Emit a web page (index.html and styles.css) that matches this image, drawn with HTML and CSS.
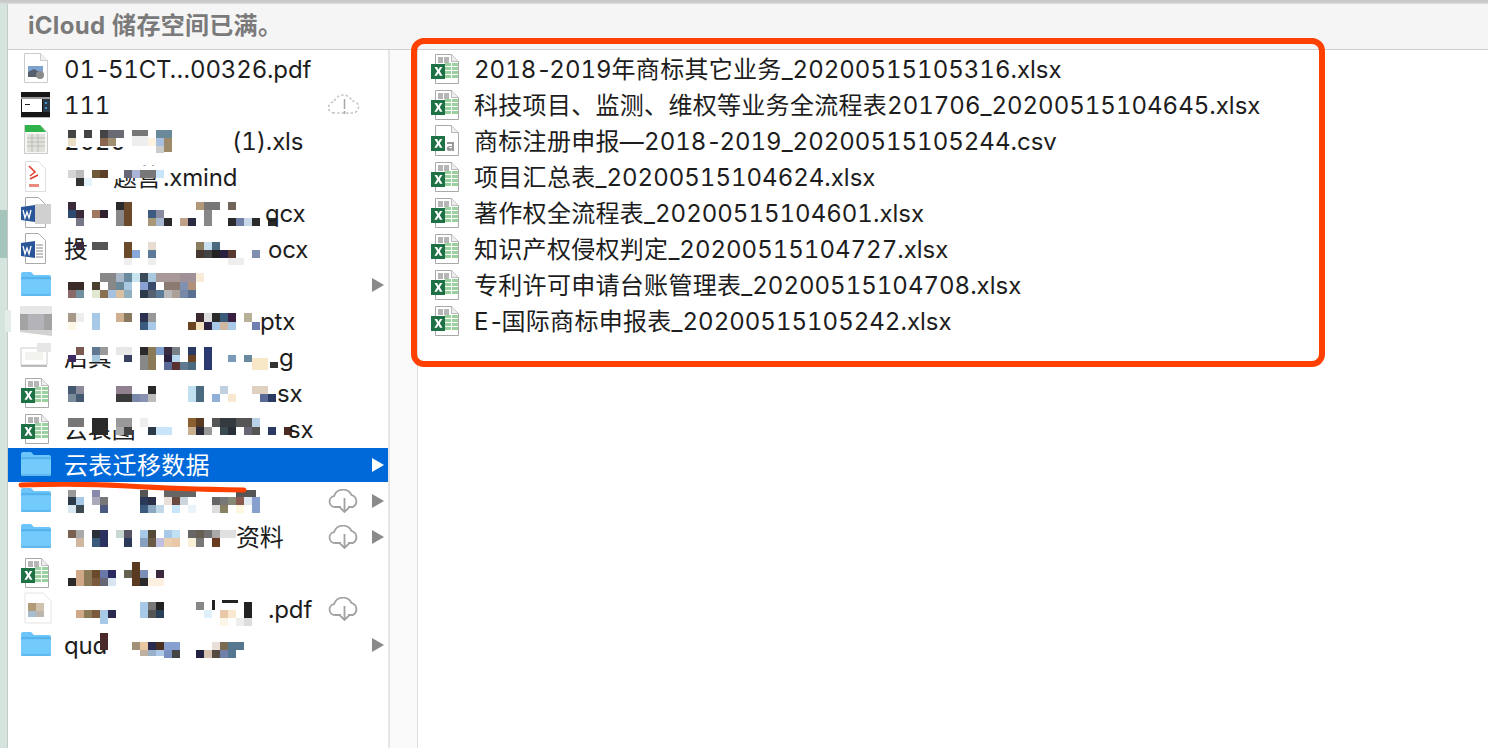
FILE: index.html
```html
<!DOCTYPE html>
<html lang="zh-CN">
<head>
  <meta charset="UTF-8">
  <title>云表迁移数据</title>
  <link rel="stylesheet" href="styles.css">
</head>
<body>
  <svg class="defs" width="0" height="0">
    <symbol id="excel" viewBox="0 0 32 34">
      <path d="M6.500 2.500h16l7 7v22h-23z" fill="#fff" stroke="#a9a9a9"/>
      <path d="M22.500 2.500v7h7" fill="#eee" stroke="#bbb"/>
      <path d="M9 5h5v6H9zM15 5h5v6h-5z" fill="#b5b5b5"/>
      <path d="M16 11h6v3h-6zM23 11h6v3h-6zM16 15h6v3h-6zM23 15h6v3h-6zM16 19h6v3h-6zM23 19h6v3h-6zM16 23h6v3h-6zM23 23h6v3h-6z" fill="#9bd09e"/>
      <path d="M2 12h14v15H2z" fill="#1e7145"/>
      <path d="M5.500 15h2.600l1.400 2.700 1.400-2.700h2.500l-2.600 4.300 2.700 4.500h-2.600l-1.500-2.900-1.500 2.900H5.400l2.700-4.500z" fill="#fff"/>
    </symbol>
    <symbol id="folder" viewBox="0 0 32 34">
      <path d="M2 6q0-2 2-2h8l3 3h15q2 0 2 2v17q0 2-2 2H4q-2 0-2-2z" fill="#6cc5fa"/>
      <path d="M2 10q0-1 1-1h27q2 0 2 1v1H2z" fill="#55b2ea"/>
      <path d="M2 12h30v14q0 2-2 2H4q-2 0-2-2z" fill="#73cbfc"/>
      <path d="M2 27h30" stroke="#4ea6dc"/>
    </symbol>
    <symbol id="cloud" viewBox="0 0 32 24">
      <path d="M13 18H7a5.500 5.500 0 0 1-1-10.900A9.500 9.500 0 0 1 23.500 6 6.500 6.500 0 0 1 25 18h-5" fill="none" stroke="#a2a2a2" stroke-width="1.800"/>
      <path d="M16.500 9v14M12 18.500l4.500 4.500 4.500-4.500" fill="none" stroke="#a2a2a2" stroke-width="1.800"/>
    </symbol>
  </svg>

  <div class="top-edge"></div>
  <div class="shell">
    <div class="desk"></div>
    <div class="finder">
      <div class="notice">iCloud 储存空间已满。</div>
      <div class="panes">
        <ul class="column col-left">
          <li class="row">
            <svg class="icon" viewBox="0 0 32 34"><path d="M5.500 1.500h16l7 7v22h-23z" fill="#fff" stroke="#ccc"/><path d="M21.500 1.500v7h7" fill="#f2f2f2" stroke="#ccc"/><path d="M9 14h15v11H9z" fill="#7fa3cf"/><path d="M9 20l6-3 9 5v3H9z" fill="#56606e"/><circle cx="21" cy="23" r="4" fill="#8a8a8a"/></svg>
            <span class="name">01<span class="dash">-</span>51CT…00326.pdf</span>
          </li>
          <li class="row">
            <svg class="icon" viewBox="0 0 32 34"><path d="M2 4h29v25H2z" fill="#161616"/><path d="M2 9h29v2H2z" fill="#9a9a9a"/><path d="M3 11h20v13H3z" fill="#fff"/><path d="M24 11h7v13h-7z" fill="#2b3a44"/><path d="M26 14h2v2h-2zM26 19h2v2h-2z" fill="#3b9ad9"/><path d="M6 16h5v1H6z" fill="#222"/><path d="M2 29h29v1H2z" fill="#bbb"/></svg>
            <span class="name">111</span>
            <svg class="badge" viewBox="0 0 32 24"><path d="M6 20a5.500 5.500 0 0 1 0-11A9.500 9.500 0 0 1 24 8a6 6 0 0 1 1 12z" fill="none" stroke="#c4c4c4" stroke-width="1.500" stroke-dasharray="2.500 2"/><path d="M16.500 6v10M16.500 18v3" stroke="#a6a6a6" stroke-width="1.500"/></svg>
          </li>
          <li class="row">
            <svg class="icon" viewBox="0 0 32 34"><path d="M5.500 1.500h16l7 7v21h-23z" fill="#f6f6f4" stroke="#ccc"/><path d="M6 1h15l6 7H6z" fill="#2fb34a"/><path d="M8 10h18v18H8z" fill="#e2e2dc"/><path d="M8 14h18M8 18h18M8 22h18M13 10v18M19 10v18" stroke="#bcbcb6"/></svg>
            <span class="name"><span class="lead">2020</span><svg class="smudge" width="168" height="34" viewBox="64 124 168 34"><path fill="#fff" d="M64 128h72v19H64z"/><path fill="#444" d="M68 130h8v8h-8zM84 130h8v8h-8zM100 130h8v8h-8z"/><path fill="#6a6a74" d="M108 130h16v8h-16z"/><path fill="#777" d="M132 130h16v6h-16z"/><path fill="#6a8a9a" d="M156 130h16v8h-16z"/><path fill="#eaddc8" d="M68 138h8v8h-8z"/><path fill="#8a6650" d="M100 138h8v8h-8z"/><path fill="#a09070" d="M108 138h8v8h-8z"/><path fill="#eee" d="M132 136h16v10h-16z"/><path fill="#fdf3e0" d="M148 138h8v8h-8z"/><path fill="#a8c0e0" d="M156 138h8v8h-8z"/><path fill="#9c8a68" d="M164 138h8v14h-8z"/><path fill="#ccc" d="M156 146h8v7h-8z"/></svg>(1).xls</span>
          </li>
          <li class="row">
            <svg class="icon" viewBox="0 0 32 34"><path d="M6.500 1.500h13l7 7v23h-20z" fill="#fff" stroke="#ddd"/><path d="M10 6l6 6-5 4M11 19l8-4" fill="none" stroke="#e03a2e" stroke-width="1.500"/><path d="M10 24h10v3H10z" fill="#e88a80"/></svg>
            <span class="name xmind"><span class="lead cjk">题营</span><svg class="smudge" width="49" height="34" viewBox="64 160 49 34"><path fill="#fff" d="M110 166h56v12h-56z"/><path fill="#d5d5d5" d="M68 170h8v8h-8z"/><path fill="#bbb" d="M76 170h8v8h-8z"/><path fill="#6e5a38" d="M92 170h8v8h-8z"/><path fill="#5e3f2a" d="M100 170h8v8h-8z"/><path fill="#667" d="M124 170h8v8h-8z"/><path fill="#aab4d8" d="M132 170h8v8h-8z"/><path fill="#777" d="M140 170h16v8h-16z"/><path fill="#c8e4f8" d="M156 170h8v8h-8z"/><path fill="#333" d="M76 178h8v8h-8z"/><path fill="#e4f4fa" d="M84 178h8v8h-8z"/></svg><span class="tail-xmind">.xmind</span></span>
          </li>
          <li class="row">
            <svg class="icon" viewBox="0 0 32 34"><path d="M6.500 1.500h13l7 7v23h-20z" fill="#fff" stroke="#aaa"/><path d="M16 8h16v20H16z" fill="#d0d0d0"/><path d="M2 11l14-2v17l-14-2z" fill="#2a5699"/><path d="M4 14l2 8 2-6 2 6 2-8" fill="none" stroke="#fff" stroke-width="1.300"/></svg>
            <span class="name"><svg class="smudge" width="201" height="34" viewBox="64 196 201 34"><path fill="#3a2a3a" d="M68 202h8v8h-8zM76 210h8v8h-8z"/><path fill="#2a2a2a" d="M116 202h8v8h-8zM164 218h8v8h-8zM228 218h8v8h-8zM252 218h8v8h-8zM268 218h8v8h-8z"/><path fill="#6a4a2a" d="M124 202h8v24h-8z"/><path fill="#b09878" d="M196 202h8v8h-8z"/><path fill="#777" d="M204 202h16v8h-16z"/><path fill="#888" d="M204 210h8v16h-8zM116 210h8v16h-8z"/><path fill="#6e6458" d="M228 202h8v8h-8z"/><path fill="#2d4a70" d="M68 210h8v8h-8z"/><path fill="#a07860" d="M92 210h8v8h-8z"/><path fill="#302030" d="M100 210h8v8h-8z"/><path fill="#3d5a80" d="M148 210h8v8h-8z"/><path fill="#8a8aa0" d="M156 210h8v8h-8z"/><path fill="#778" d="M76 218h8v8h-8z"/><path fill="#a89878" d="M148 218h8v8h-8z"/><path fill="#a8b8d0" d="M156 218h8v8h-8z"/><path fill="#c0a088" d="M180 218h8v8h-8z"/><path fill="#2a2a40" d="M188 218h8v8h-8z"/><path fill="#7080a8" d="M236 218h8v8h-8z"/><path fill="#c8d8e8" d="M244 218h8v8h-8z"/></svg>qcx</span>
          </li>
          <li class="row">
            <svg class="icon" viewBox="0 0 32 34"><path d="M6.500 1.500h13l7 7v23h-20z" fill="#fff" stroke="#aaa"/><path d="M17 13h7M17 16h7M17 19h7M17 22h7M17 25h7" stroke="#888"/><path d="M2 11l14-2v17l-14-2z" fill="#2a5699"/><path d="M4 14l2 8 2-6 2 6 2-8" fill="none" stroke="#fff" stroke-width="1.300"/></svg>
            <span class="name"><span class="lead cjk">投</span><svg class="smudge" width="204" height="34" viewBox="64 232 204 34"><path fill="#3a2a3a" d="M76 242h8v8h-8z"/><path fill="#555" d="M92 242h16v8H92z"/><path fill="#6a4a2a" d="M124 242h8v16h-8z"/><path fill="#e8dcd0" d="M148 242h8v8h-8z"/><path fill="#8a7e5e" d="M196 242h8v8h-8z"/><path fill="#c8dff0" d="M204 242h8v8h-8z"/><path fill="#4a6a80" d="M212 242h8v8h-8z"/><path fill="#88a8d8" d="M132 250h8v8h-8z"/><path fill="#5a7a98" d="M148 250h8v8h-8z"/><path fill="#443830" d="M196 250h8v8h-8z"/><path fill="#444" d="M204 250h8v8h-8z"/><path fill="#222" d="M212 250h8v8h-8z"/><path fill="#2a2040" d="M220 250h8v8h-8z"/><path fill="#5a3a30" d="M228 250h8v8h-8z"/><path fill="#8090b0" d="M252 250h8v8h-8z"/><path fill="#eee" d="M124 258h8v7h-8zM148 258h8v7h-8zM228 258h16v7h-16z"/></svg>ocx</span>
          </li>
          <li class="row">
            <svg class="icon"><use href="#folder"/></svg>
            <span class="name"><svg class="smudge" width="140" height="34" viewBox="64 268 140 34"><path fill="#888" d="M100 273h16v9h-16zM108 282h8v8h-8z"/><path fill="#a8b8c8" d="M116 273h8v9h-8z"/><path fill="#6a8aa0" d="M124 273h8v9h-8z"/><path fill="#c8e4f0" d="M132 273h8v9h-8z"/><path fill="#3a4a58" d="M140 273h8v9h-8z"/><path fill="#a8c8e0" d="M148 273h8v9h-8zM124 282h8v8h-8z"/><path fill="#a89898" d="M156 273h24v9h-24z"/><path fill="#a09098" d="M180 273h16v9h-16z"/><path fill="#f8ecd8" d="M196 273h8v9h-8z"/><path fill="#3a2a28" d="M68 282h16v8H68z"/><path fill="#4a4030" d="M92 282h8v8h-8z"/><path fill="#6a8a9a" d="M116 282h8v8h-8z"/><path fill="#8aa0d0" d="M140 282h8v8h-8z"/><path fill="#3a4a6a" d="M148 282h8v8h-8z"/><path fill="#8a7a70" d="M164 282h16v8h-16z"/><path fill="#8090b0" d="M180 282h8v8h-8z"/><path fill="#b09078" d="M188 282h8v8h-8z"/><path fill="#8a6a68" d="M68 290h8v8h-8z"/><path fill="#7090a0" d="M76 290h8v8h-8z"/><path fill="#e0e8d0" d="M92 290h8v8h-8z"/><path fill="#887050" d="M100 290h8v8h-8z"/><path fill="#a8c0e0" d="M108 290h8v8h-8z"/><path fill="#d8c0a0" d="M116 290h8v8h-8z"/><path fill="#90b0c0" d="M124 290h8v8h-8z"/><path fill="#2a3a4a" d="M140 290h8v8h-8z"/><path fill="#556070" d="M148 290h8v8h-8z"/><path fill="#5a7a98" d="M156 290h8v8h-8z"/><path fill="#b8b8b8" d="M164 290h8v8h-8z"/><path fill="#aaa098" d="M172 290h8v8h-8z"/><path fill="#7888a8" d="M180 290h8v8h-8z"/><path fill="#5a7090" d="M188 290h8v8h-8z"/></svg></span>
            <span></span>
            <svg class="arrow" viewBox="0 0 12 14"><path d="M0 0l12 7-12 7z"/></svg>
          </li>
          <li class="row">
            <svg class="icon" viewBox="0 0 32 34"><path d="M-14 6h6v22h-6z" fill="#e4ece8"/><path d="M1 2h32v22H1z" fill="#e6e6e6"/><path d="M1 10h32v16H1z" fill="#a3a3a3"/><path d="M9 10h16v16H9z" fill="#b4b4b8"/><path d="M1 26h32v6L1 28z" fill="#d2d2d2"/></svg>
            <span class="name"><svg class="smudge" width="196" height="34" viewBox="64 304 196 34"><path fill="#a89888" d="M68 313h8v9h-8z"/><path fill="#eee" d="M76 313h8v9h-8z"/><path fill="#a8c8e8" d="M92 313h8v17h-8zM148 322h8v8h-8zM212 322h8v8h-8zM228 322h8v8h-8z"/><path fill="#d0b090" d="M116 313h8v9h-8z"/><path fill="#887860" d="M124 313h8v9h-8z"/><path fill="#2a3050" d="M140 313h8v9h-8z"/><path fill="#999" d="M148 313h8v9h-8z"/><path fill="#3a2a30" d="M196 313h8v9h-8z"/><path fill="#ddd" d="M204 313h8v9h-8z"/><path fill="#2a2a2a" d="M212 313h8v9h-8z"/><path fill="#3a5a7a" d="M220 313h8v9h-8z"/><path fill="#3a2040" d="M228 313h8v9h-8z"/><path fill="#b8b098" d="M244 313h8v9h-8z"/><path fill="#fdf5e5" d="M68 322h8v8h-8z"/><path fill="#3a5a80" d="M140 322h8v8h-8z"/><path fill="#6a4420" d="M188 322h8v8h-8z"/><path fill="#f0e0c0" d="M196 322h8v8h-8z"/><path fill="#2a2040" d="M204 322h8v8h-8z"/><path fill="#d0b8a0" d="M220 322h8v8h-8z"/><path fill="#7080b0" d="M252 322h8v8h-8z"/></svg>ptx</span>
          </li>
          <li class="row">
            <svg class="icon" viewBox="0 0 32 34"><path d="M2 8h26v17H2z" fill="#fff" stroke="#ccc"/><path d="M6 12h18v8H6z" fill="#f2f2ee"/><path d="M18 3h14v9H18z" fill="#e6e6e6"/><path d="M2 25h26v2H2z" fill="#bbb"/></svg>
            <span class="name"><span class="lead cjk">后真</span><svg class="smudge" width="215" height="34" viewBox="64 340 215 34"><path fill="#fff" d="M64 344h56v15H64z"/><path fill="#7a5a50" d="M76 347h8v8h-8z"/><path fill="#607890" d="M92 347h8v8h-8z"/><path fill="#999" d="M100 347h8v8h-8z"/><path fill="#e8e8e8" d="M116 347h16v8h-16z"/><path fill="#2a2a2a" d="M140 347h8v8h-8z"/><path fill="#8a7a58" d="M148 347h8v23h-8z"/><path fill="#80a0d0" d="M156 347h8v8h-8z"/><path fill="#3a2a40" d="M164 347h8v8h-8z"/><path fill="#788088" d="M172 347h8v8h-8z"/><path fill="#2a3a60" d="M188 347h8v8h-8z"/><path fill="#2a3a70" d="M204 347h8v23h-8z"/><path fill="#3a2a60" d="M68 355h8v7h-8z"/><path fill="#a8c8e0" d="M92 355h8v7h-8z"/><path fill="#3a4060" d="M124 355h8v7h-8z"/><path fill="#888" d="M140 355h8v15h-8z"/><path fill="#2a2040" d="M164 355h8v7h-8z"/><path fill="#b8d8f0" d="M172 355h8v7h-8z"/><path fill="#6a4424" d="M188 355h8v7h-8z"/><path fill="#7a9ab8" d="M228 355h8v7h-8z"/><path fill="#6a8aa0" d="M244 355h8v7h-8z"/><path fill="#5a6a98" d="M164 362h8v8h-8z"/><path fill="#5a3030" d="M172 362h8v8h-8z"/><path fill="#607890" d="M180 362h8v8h-8z"/><path fill="#4a6a80" d="M188 362h8v8h-8z"/><path fill="#f8e8c8" d="M252 358h16v12h-16z"/><path fill="#333" d="M270 362h8v6h-8z"/></svg>g</span>
          </li>
          <li class="row">
            <svg class="icon"><use href="#excel"/></svg>
            <span class="name"><svg class="smudge" width="213" height="34" viewBox="64 376 213 34"><path fill="#445870" d="M68 386h8v8h-8zM76 394h8v8h-8z"/><path fill="#8a8a9a" d="M76 386h8v8h-8z"/><path fill="#908090" d="M116 386h16v8h-16z"/><path fill="#2a2a2a" d="M148 386h8v8h-8z"/><path fill="#c0e0f0" d="M188 386h8v16h-8z"/><path fill="#4a6a80" d="M196 386h8v16h-8z"/><path fill="#c0d0e0" d="M220 386h8v8h-8z"/><path fill="#e0d0c0" d="M252 386h16v8h-16z"/><path fill="#7a8a98" d="M68 394h8v8h-8z"/><path fill="#3a3a3a" d="M116 394h16v8h-16z"/><path fill="#7888a8" d="M132 394h8v8h-8z"/><path fill="#8a90b0" d="M140 394h8v8h-8z"/><path fill="#bbb" d="M148 394h8v8h-8z"/><path fill="#90b0d8" d="M212 394h8v8h-8z"/><path fill="#f8e8d0" d="M228 394h8v8h-8z"/><path fill="#5a6a98" d="M260 394h8v8h-8z"/><path fill="#2a3a60" d="M268 394h8v8h-8z"/></svg>sx</span>
          </li>
          <li class="row">
            <svg class="icon"><use href="#excel"/></svg>
            <span class="name"><span class="lead cjk">云表图</span><svg class="smudge" width="224" height="34" viewBox="64 412 224 34"><path fill="#fff" d="M64 415h72v15H64z"/><path fill="#777" d="M68 418h16v9H68z"/><path fill="#2a2a2a" d="M92 418h16v17H92z"/><path fill="#999" d="M116 418h16v9h-16z"/><path fill="#eee" d="M140 418h8v9h-8z"/><path fill="#8a6030" d="M188 418h8v9h-8z"/><path fill="#5a3a20" d="M196 418h8v9h-8z"/><path fill="#555" d="M212 418h8v9h-8zM236 418h16v9h-16zM252 427h8v8h-8z"/><path fill="#333a40" d="M220 418h16v9h-16z"/><path fill="#b8d0e8" d="M252 418h8v9h-8z"/><path fill="#aaa" d="M116 427h8v8h-8z"/><path fill="#444" d="M124 427h8v8h-8z"/><path fill="#2a3a48" d="M148 427h8v8h-8z"/><path fill="#c8e4f8" d="M156 427h16v8h-16z"/><path fill="#c8b090" d="M188 427h8v8h-8z"/><path fill="#2a2a3a" d="M196 427h8v8h-8z"/><path fill="#999" d="M204 427h8v8h-8z"/><path fill="#3a4a50" d="M220 427h8v8h-8z"/><path fill="#2a3038" d="M228 427h8v8h-8z"/><path fill="#667" d="M244 427h8v8h-8z"/><path fill="#2a3a60" d="M268 427h8v8h-8z"/><path fill="#4a2a20" d="M284 427h8v8h-8z"/></svg>sx</span>
          </li>
          <li class="row selected">
            <svg class="icon"><use href="#folder"/></svg>
            <span class="name">云表迁移数据</span>
            <span></span>
            <svg class="arrow" viewBox="0 0 12 14"><path d="M0 0l12 7-12 7z"/></svg>
          </li>
          <li class="row">
            <svg class="icon"><use href="#folder"/></svg>
            <span class="name"><svg class="smudge" width="200" height="34" viewBox="64 484 200 34"><path fill="#999" d="M68 490h8v7h-8z"/><path fill="#88a" d="M92 490h8v7h-8z"/><path fill="#555" d="M140 490h8v7h-8zM236 490h20v7h-20z"/><path fill="#666" d="M164 490h32v7h-32zM212 497h8v8h-8z"/><path fill="#2a3a48" d="M68 497h8v8h-8z"/><path fill="#a8c8e8" d="M76 497h8v8h-8z"/><path fill="#aab" d="M92 497h8v8h-8z"/><path fill="#777" d="M100 497h8v8h-8zM220 497h8v8h-8z"/><path fill="#2a3a58" d="M140 497h8v8h-8z"/><path fill="#2a3048" d="M148 497h8v8h-8z"/><path fill="#e8e0d8" d="M164 497h8v8h-8z"/><path fill="#6a4a40" d="M172 497h8v8h-8z"/><path fill="#ccd4dc" d="M180 497h8v8h-8z"/><path fill="#887" d="M228 497h8v8h-8z"/><path fill="#8a5a50" d="M236 497h8v8h-8z"/><path fill="#e0e8f0" d="M244 497h8v8h-8z"/><path fill="#88a0d0" d="M252 497h8v16h-8z"/><path fill="#d8e8f0" d="M68 505h8v8h-8z"/><path fill="#3a4a50" d="M76 505h8v8h-8z"/><path fill="#4a5a80" d="M100 505h8v8h-8z"/><path fill="#3a5a80" d="M140 505h8v8h-8z"/><path fill="#8aa8c0" d="M148 505h8v8h-8z"/><path fill="#c0d8e8" d="M156 505h8v8h-8z"/><path fill="#c8e4f8" d="M172 505h8v8h-8z"/><path fill="#e8f4fa" d="M188 505h8v8h-8z"/><path fill="#ddd" d="M212 505h8v8h-8z"/><path fill="#888060" d="M220 505h8v8h-8z"/><path fill="#fff8e0" d="M236 505h8v8h-8z"/></svg></span>
            <svg class="badge"><use href="#cloud"/></svg>
            <svg class="arrow" viewBox="0 0 12 14"><path d="M0 0l12 7-12 7z"/></svg>
          </li>
          <li class="row">
            <svg class="icon"><use href="#folder"/></svg>
            <span class="name"><svg class="smudge" width="172" height="34" viewBox="64 520 172 34"><path fill="#7a6050" d="M68 530h8v8h-8z"/><path fill="#aaa" d="M76 530h8v8h-8z"/><path fill="#2a3038" d="M92 530h8v8h-8z"/><path fill="#2a3060" d="M100 530h8v8h-8zM100 538h8v9h-8z"/><path fill="#c8d8d0" d="M116 530h8v8h-8z"/><path fill="#556" d="M124 530h8v8h-8z"/><path fill="#a8c8e8" d="M140 530h8v8h-8zM164 530h8v8h-8z"/><path fill="#554a38" d="M148 530h8v8h-8z"/><path fill="#c0e0f4" d="M172 530h8v8h-8z"/><path fill="#666" d="M188 530h8v8h-8z"/><path fill="#665e50" d="M196 530h8v8h-8z"/><path fill="#707070" d="M204 530h8v8h-8z"/><path fill="#aaa8a8" d="M212 530h8v8h-8z"/><path fill="#e0e0e0" d="M220 530h16v8h-16z"/><path fill="#d0b8a0" d="M76 538h8v9h-8z"/><path fill="#3a5a7a" d="M92 538h8v9h-8z"/><path fill="#2a3a58" d="M124 538h8v9h-8z"/><path fill="#88a0c0" d="M140 538h8v9h-8z"/><path fill="#6a5a48" d="M148 538h8v9h-8z"/><path fill="#c0c0e0" d="M156 538h8v9h-8z"/><path fill="#e8d0b0" d="M164 538h8v9h-8z"/><path fill="#e8c8a8" d="M172 538h8v9h-8z"/><path fill="#f8f0d8" d="M188 538h8v9h-8z"/><path fill="#777" d="M196 538h8v9h-8z"/><path fill="#6a3a20" d="M212 538h8v9h-8z"/></svg><span class="cjk">资料</span></span>
            <svg class="badge"><use href="#cloud"/></svg>
            <svg class="arrow" viewBox="0 0 12 14"><path d="M0 0l12 7-12 7z"/></svg>
          </li>
          <li class="row">
            <svg class="icon"><use href="#excel"/></svg>
            <span class="name"><svg class="smudge" width="110" height="34" viewBox="64 556 110 34"><path fill="#5a3a20" d="M132 562h8v24h-8z"/><path fill="#d0a888" d="M76 570h8v16h-8z"/><path fill="#8a7a58" d="M84 570h8v16h-8z"/><path fill="#6a4a2a" d="M92 570h8v8h-8z"/><path fill="#6a78a8" d="M100 570h8v8h-8z"/><path fill="#2a2a60" d="M108 570h8v8h-8z"/><path fill="#666050" d="M124 570h8v8h-8z"/><path fill="#7a90b8" d="M140 570h8v8h-8z"/><path fill="#3a2a40" d="M156 570h8v8h-8z"/><path fill="#2a2a2a" d="M68 578h8v8h-8zM140 578h8v8h-8z"/><path fill="#7a5a3a" d="M92 578h8v8h-8z"/><path fill="#667" d="M100 578h8v8h-8z"/><path fill="#d8e4f0" d="M108 578h8v8h-8z"/><path fill="#fdf0e0" d="M148 578h16v8h-16z"/></svg></span>
          </li>
          <li class="row">
            <svg class="icon" viewBox="0 0 32 34"><path d="M6 1h18l8 8v22H6z" fill="#fff" stroke="#e4e4e4"/><path d="M9 11h8v8H9z" fill="#b09a78"/><path d="M17 11h8v8h-8z" fill="#cfc2ae"/><path d="M9 19h8v6H9z" fill="#a8bcd0"/><path d="M17 19h8v6h-8z" fill="#bcb6ae"/></svg>
            <span class="name"><svg class="smudge" width="204" height="34" viewBox="64 592 204 34"><path fill="#a8c8e8" d="M140 602h8v16h-8zM100 610h8v14h-8z"/><path fill="#777" d="M148 602h8v8h-8z"/><path fill="#222" d="M156 602h8v8h-8zM244 602h8v16h-8zM212 600h3v10h-3zM222 600h16v3h-16z"/><path fill="#888" d="M196 602h8v8h-8z"/><path fill="#d0a888" d="M76 610h8v8h-8z"/><path fill="#8a7a58" d="M84 610h8v8h-8z"/><path fill="#7a5a3a" d="M92 610h8v8h-8z"/><path fill="#2a2a50" d="M108 610h8v8h-8z"/><path fill="#555" d="M148 610h8v8h-8z"/><path fill="#2a4058" d="M156 610h8v8h-8z"/><path fill="#e0f0fa" d="M204 610h8v8h-8z"/><path fill="#e8c8a8" d="M220 610h8v8h-8z"/><path fill="#f8e8d0" d="M228 610h8v8h-8z"/><path fill="#fdf5e8" d="M220 618h8v8h-8z"/><path fill="#eee" d="M236 618h8v8h-8z"/><path fill="#ddd" d="M244 618h8v8h-8z"/></svg>.pdf</span>
            <svg class="badge"><use href="#cloud"/></svg>
          </li>
          <li class="row">
            <svg class="icon"><use href="#folder"/></svg>
            <span class="name"><span class="lead">qud</span><svg class="smudge" width="180" height="34" viewBox="64 628 180 34"><path fill="#4a2a28" d="M100 633h8v17h-8z"/><path fill="#a09078" d="M132 642h8v8h-8z"/><path fill="#e8c8a0" d="M140 642h8v8h-8z"/><path fill="#2a2a50" d="M148 642h8v8h-8z"/><path fill="#4a3020" d="M156 642h8v8h-8z"/><path fill="#88a0d0" d="M164 642h16v8h-16z"/><path fill="#e8e0d8" d="M212 642h8v8h-8z"/><path fill="#7a6a50" d="M220 642h8v8h-8z"/><path fill="#557890" d="M228 642h16v8h-16zM228 650h8v8h-8z"/><path fill="#c0b0a0" d="M140 650h8v6h-8z"/><path fill="#98b0c8" d="M148 650h8v6h-8z"/><path fill="#b0c8e8" d="M156 650h8v6h-8z"/><path fill="#7a90c0" d="M164 650h8v8h-8z"/><path fill="#444" d="M172 650h8v8h-8z"/><path fill="#222040" d="M196 650h8v8h-8z"/><path fill="#d8c0b0" d="M204 650h8v8h-8z"/><path fill="#554a40" d="M212 650h8v8h-8z"/><path fill="#7080a8" d="M220 650h8v8h-8z"/></svg></span>
            <span></span>
            <svg class="arrow" viewBox="0 0 12 14"><path d="M0 0l12 7-12 7z"/></svg>
          </li>
        </ul>
        <div class="gutter"></div>
        <ul class="column col-right">
          <li class="row"><svg class="icon"><use href="#excel"/></svg><span class="name"><span><span class="lat">2018<span class="dash">-</span>2019</span>年商标其它业务<span class="lat">_20200515105316.xlsx</span></span></span></li>
          <li class="row"><svg class="icon"><use href="#excel"/></svg><span class="name"><span>科技项目、监测、维权等业务全流程表<span class="lat">201706_20200515104645.xlsx</span></span></span></li>
          <li class="row">
            <svg class="icon" viewBox="0 0 32 34"><path d="M6.500 1.500h16l7 7v23h-23z" fill="#fff" stroke="#aaa"/><path d="M22.500 1.500v7h7" fill="#eee" stroke="#bbb"/><path d="M2 12h14v15H2z" fill="#1e7145"/><path d="M5.500 15h2.600l1.400 2.700 1.400-2.700h2.500l-2.600 4.300 2.700 4.500h-2.600l-1.500-2.900-1.500 2.900H5.400l2.700-4.500z" fill="#fff"/><path d="M18 18h7v9h-2v-1q-3 2-5 0-1-3 2-4h3v-2h-5zM20 23q0 2 3 1v-1z" fill="#999"/></svg>
            <span class="name"><span>商标注册申报—<span class="lat">2018<span class="dash">-</span>2019_20200515105244.csv</span></span></span>
          </li>
          <li class="row"><svg class="icon"><use href="#excel"/></svg><span class="name"><span>项目汇总表<span class="lat">_20200515104624.xlsx</span></span></span></li>
          <li class="row"><svg class="icon"><use href="#excel"/></svg><span class="name"><span>著作权全流程表<span class="lat">_20200515104601.xlsx</span></span></span></li>
          <li class="row"><svg class="icon"><use href="#excel"/></svg><span class="name"><span>知识产权侵权判定<span class="lat">_20200515104727.xlsx</span></span></span></li>
          <li class="row"><svg class="icon"><use href="#excel"/></svg><span class="name"><span>专利许可申请台账管理表<span class="lat">_20200515104708.xlsx</span></span></span></li>
          <li class="row"><svg class="icon"><use href="#excel"/></svg><span class="name"><span><span class="lat">E<span class="dash">-</span></span>国际商标申报表<span class="lat">_20200515105242.xlsx</span></span></span></li>
        </ul>
      </div>
    </div>
  </div>

  <!-- annotations drawn on top of the screenshot -->
  <div class="mark-box"></div>
  <svg class="mark-line" width="240" height="12" viewBox="0 0 240 12"><path d="M3 3Q60 1 110 4T226 8" fill="none" stroke="#ff4000" stroke-width="5" stroke-linecap="round"/></svg>
</body>
</html>
```

FILE: styles.css
```css
* {
  box-sizing: border-box;
}

html, body {
  margin: 0;
  height: 748px;
  overflow: hidden;
}

body {
  position: relative;
  display: flex;
  flex-direction: column;
  background: #fff;
  font-family: Inter, 'Noto Sans CJK SC', sans-serif;
  font-variant-numeric: tabular-nums;
  color: #1d1d1d;
}

.defs {
  position: absolute;
}

.top-edge {
  height: 4px;
  background: linear-gradient(#c6c6c6, #cfcfcf 75%, #e8e8e8);
}

.shell {
  flex: 1;
  display: flex;
  min-height: 0;
}

.desk {
  width: 8px;
  border-right: 1px solid #c4cbc8;
  background: linear-gradient(#d6e4de 206px, #a5c4bb 206px, #a5c4bb 254px, #d6e4de 254px);
}

.finder {
  flex: 1;
  display: flex;
  flex-direction: column;
  min-width: 0;
}

.notice {
  height: 46px;
  padding-left: 20px;
  background: #f5f5f5;
  border-bottom: 1px solid #cfcfcf;
  color: #7a7a7a;
  font-size: 24px;
  font-weight: 700;
  letter-spacing: 0.3px;
  line-height: 44px;
}

.panes {
  flex: 1;
  display: flex;
  min-height: 0;
}

.column {
  margin: 0;
  padding: 2px 0 0;
  list-style: none;
  display: flex;
  flex-direction: column;
  gap: 2px;
}

.col-left {
  width: 380px;
  letter-spacing: -0.15px;
}

.col-right {
  flex: 1;
}

.gutter {
  width: 30px;
  background: #fafafa;
  border-left: 2px solid #e6e6e6;
  border-right: 1px solid #dedede;
}

.row {
  height: 34px;
  display: grid;
  grid-template-columns: 56px 264px 32px 12px;
  align-items: center;
  font-size: 24px;
  white-space: nowrap;
}

.col-right .row {
  grid-template-columns: 56px 1fr;
  letter-spacing: 0.3px;
}

.selected {
  background: #0069d9;
  color: #fff;
  letter-spacing: 0.3px;
}

.selected .arrow {
  fill: #fff;
}

.icon {
  width: 32px;
  height: 34px;
  margin-left: 11px;
  overflow: visible;
}

.name {
  display: flex;
  align-items: center;
  height: 34px;
}

/* CJK fallback pushes the baseline down, lift those lines back up */
.col-right .name,
.selected .name {
  padding-bottom: 4px;
}

.cjk {
  margin-bottom: 4px;
}

.lat {
  letter-spacing: 0;
}

.dash {
  letter-spacing: -2.5px;
}

.lead {
  width: 0;
}

.xmind .lead {
  margin-left: 49px;
}

.xmind .smudge {
  margin-left: -49px;
}

.tail-xmind {
  margin-left: 50px;
}

.smudge {
  flex: none;
  overflow: visible;
}

.badge {
  width: 32px;
  height: 24px;
  overflow: visible;
}

.arrow {
  width: 12px;
  height: 14px;
  margin-left: 12px;
  fill: #8a8a8a;
}

/* red pen marks */
.mark-box {
  position: absolute;
  left: 411px;
  top: 38px;
  width: 914px;
  height: 329px;
  border: 6px solid #ff4000;
  border-radius: 13px;
}

.mark-line {
  position: absolute;
  left: 18px;
  top: 482px;
}
```
